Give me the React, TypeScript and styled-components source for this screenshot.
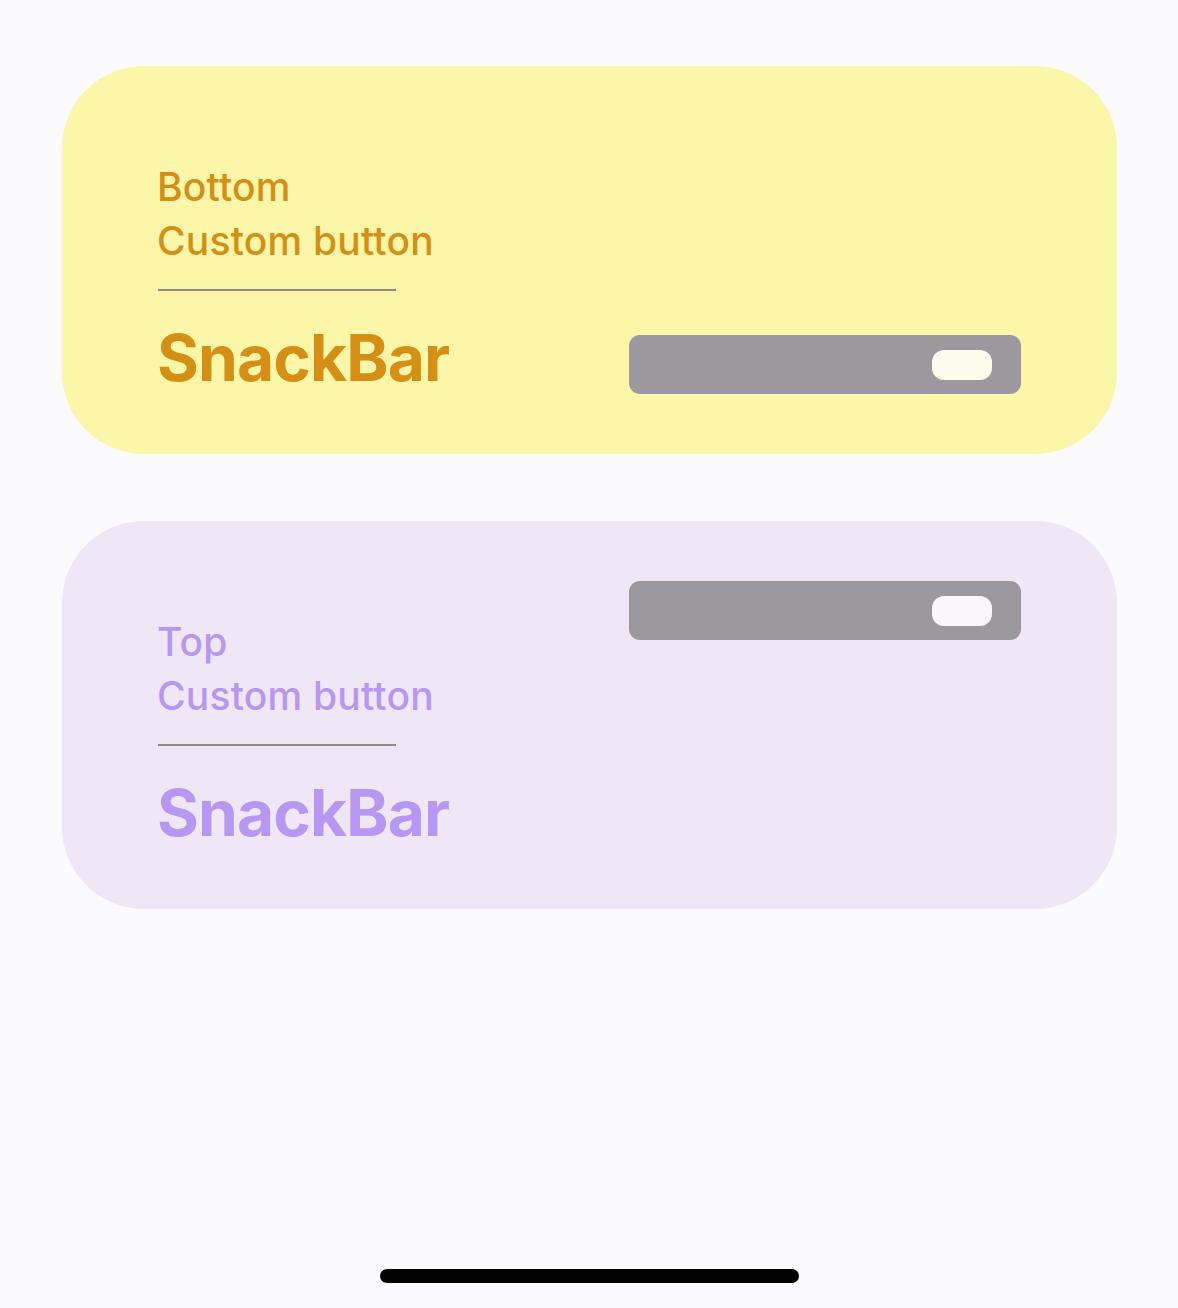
import React from "react";
import styled, { createGlobalStyle } from "styled-components";

const Global = createGlobalStyle`
  html, body { margin: 0; padding: 0; background: #fbfbfe; }
  body { font-family: Inter, "Noto Sans", sans-serif; }
`;

const Screen = styled.div`
  width: 1178px;
  height: 1308px;
  box-sizing: border-box;
  padding: 66px 61px 0 62px;
  display: flex;
  flex-direction: column;
  gap: 67px;
  position: relative;
`;

const Card = styled.div<{ $bg: string; $top?: boolean }>`
  height: 388px;
  box-sizing: border-box;
  border-radius: 82px;
  background: ${(p) => p.$bg};
  padding: 60px 96px 60px 95px;
  display: flex;
  justify-content: space-between;
  align-items: ${(p) => (p.$top ? "flex-start" : "flex-end")};
`;

const TextCol = styled.div<{ $color: string }>`
  align-self: flex-start;
  padding-top: 34px;
  display: flex;
  flex-direction: column;
  color: ${(p) => p.$color};
`;

const Small = styled.div`
  font-size: 39px;
  font-weight: 500;
  line-height: 54px;
  letter-spacing: 0.2px;
`;

const Divider = styled.div`
  width: 238px;
  height: 2px;
  background: #8f8c86;
  margin: 21px 0 32px 1px;
`;

const Big = styled.div`
  font-size: 64px;
  font-weight: 700;
  line-height: 70px;
  letter-spacing: -0.9px;
`;

const Bar = styled.div`
  width: 392px;
  height: 59px;
  border-radius: 11px;
  background: #9b999d;
  display: flex;
  align-items: center;
  justify-content: flex-end;
  padding-right: 29px;
  box-sizing: border-box;
`;

const Pill = styled.div<{ $fill: string }>`
  width: 60px;
  height: 30px;
  border-radius: 12px;
  background: ${(p) => p.$fill};
`;

const HomeIndicator = styled.div`
  position: absolute;
  left: 380px;
  top: 1269px;
  width: 419px;
  height: 14px;
  border-radius: 7px;
  background: #000;
`;

export default function App() {
  return (
    <>
      <Global />
      <Screen>
        <Card $bg="#fcf6a8">
          <TextCol $color="#d48f14">
            <Small>Bottom</Small>
            <Small>Custom button</Small>
            <Divider />
            <Big>SnackBar</Big>
          </TextCol>
          <Bar>
            <Pill $fill="#fefcec" />
          </Bar>
        </Card>
        <Card $bg="#efe6f6" $top>
          <TextCol $color="#b797f4">
            <Small>Top</Small>
            <Small>Custom button</Small>
            <Divider />
            <Big>SnackBar</Big>
          </TextCol>
          <Bar>
            <Pill $fill="#f9f6fc" />
          </Bar>
        </Card>
        <HomeIndicator />
      </Screen>
    </>
  );
}
